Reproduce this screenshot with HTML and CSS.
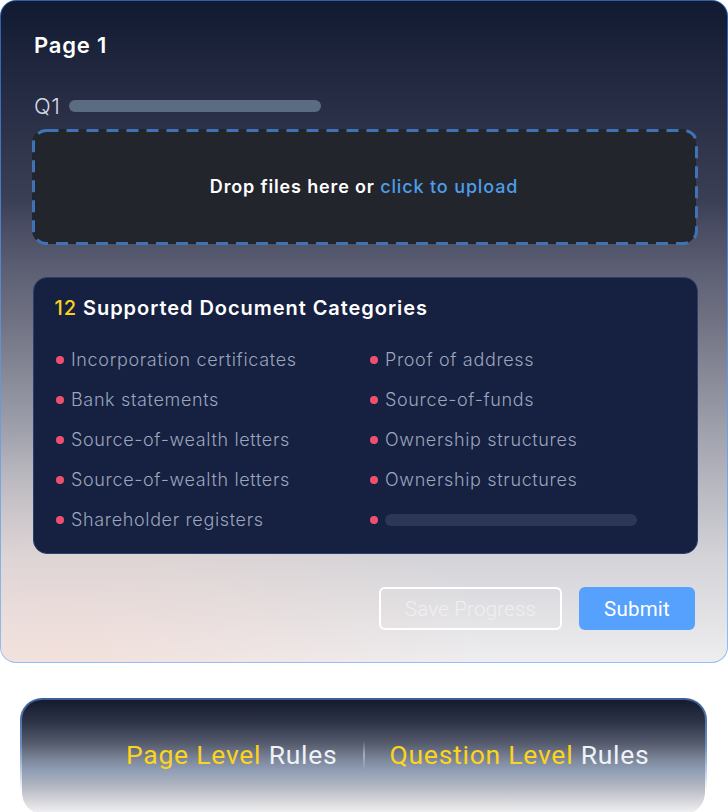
FILE: index.html
```html
<!DOCTYPE html>
<html lang="en">
<head>
<meta charset="utf-8">
<title>Upload</title>
<link rel="stylesheet" href="styles.css">
</head>
<body>
<div class="card">
  <h1 class="page-title">Page 1</h1>
  <div class="question">
    <span class="q-label">Q1</span>
    <span class="q-bar"></span>
  </div>
  <div class="dropzone">
    <svg class="dash" width="666" height="116" viewBox="0 0 666 116" aria-hidden="true">
      <rect x="1.5" y="1.5" width="663" height="113" rx="13" ry="13" fill="none" stroke="#3f73b6" stroke-width="3" stroke-dasharray="12 8"/>
    </svg>
    <span class="drop-text">Drop files here or <span class="drop-link">click to upload</span></span>
  </div>
  <div class="categories">
    <div class="cat-title"><span class="cat-count">12</span> Supported Document Categories</div>
    <ul class="cat-list">
      <li class="cat-item"><span class="dot"></span>Incorporation certificates</li>
      <li class="cat-item"><span class="dot"></span>Proof of address</li>
      <li class="cat-item"><span class="dot"></span>Bank statements</li>
      <li class="cat-item"><span class="dot"></span>Source-of-funds</li>
      <li class="cat-item"><span class="dot"></span>Source-of-wealth letters</li>
      <li class="cat-item"><span class="dot"></span>Ownership structures</li>
      <li class="cat-item"><span class="dot"></span>Source-of-wealth letters</li>
      <li class="cat-item"><span class="dot"></span>Ownership structures</li>
      <li class="cat-item"><span class="dot"></span>Shareholder registers</li>
      <li class="cat-item"><span class="dot"></span><span class="cat-bar"></span></li>
    </ul>
  </div>
  <div class="actions">
    <button class="btn btn-outline">Save Progress</button>
    <button class="btn btn-primary">Submit</button>
  </div>
</div>
<div class="rules">
  <div class="rule rule-left"><span class="hl">Page Level</span> Rules</div>
  <span class="rule-divider"></span>
  <div class="rule rule-right"><span class="hl">Question Level</span> Rules</div>
</div>
</body>
</html>
```
FILE: styles.css
```css
* { box-sizing: border-box; }
html, body {
  margin: 0;
  padding: 0;
  background: #ffffff;
  width: 728px;
  height: 812px;
  overflow: hidden;
  font-family: Inter, "Noto Sans", sans-serif;
}

.card {
  width: 728px;
  height: 663px;
  border: 1.5px solid transparent;
  border-radius: 16px;
  padding: 29.5px 31px 32px 31px;
  display: flex;
  flex-direction: column;
  background:
    radial-gradient(ellipse 60% 35% at 8% 100%, rgba(246, 214, 204, 0.55), rgba(246, 214, 204, 0) 100%) padding-box,
    linear-gradient(180deg, #111a31 0%, #252b42 14%, #3b3f56 30%, #5b5e72 40%, #6f7182 48%, #8b8d9b 58%, #b3b4bd 72%, #d3d3d8 84%, #eeeef0 100%) padding-box,
    linear-gradient(180deg, #2f5fa6 0%, #5f8fd6 50%, #94bdf5 100%) border-box;
}

.page-title {
  margin: 0;
  font-size: 22px;
  line-height: 28px;
  font-weight: 600;
  letter-spacing: 0.8px;
  color: #ffffff;
  padding-left: 2px;
}

.question {
  margin-top: 33px;
  height: 28px;
  display: flex;
  align-items: center;
  gap: 9px;
}
.q-label {
  font-size: 22px;
  line-height: 28px;
  font-weight: 300;
  letter-spacing: 0.5px;
  color: #d6dae2;
  padding-left: 2px;
}
.q-bar {
  width: 252px;
  height: 12px;
  border-radius: 6px;
  background: #5a6b82;
}

.dropzone {
  position: relative;
  margin-top: 9px;
  height: 116px;
  border-radius: 14px;
  background: #23252d;
  display: flex;
  align-items: center;
  justify-content: center;
}
.dash {
  position: absolute;
  left: 0;
  top: 0;
}
.drop-text {
  font-size: 18px;
  font-weight: 600;
  letter-spacing: 0.85px;
  color: #ffffff;
}
.drop-link {
  color: #4d9de8;
  font-weight: 500;
}

.categories {
  margin-top: 33px;
  height: 277px;
  margin-left: 1px;
  margin-right: -2px;
  background: #162040;
  border: 1.5px solid #29406f;
  border-radius: 14px;
  padding: 15.5px 20px 14.5px 20.5px;
}
.cat-title {
  font-size: 20px;
  line-height: 28px;
  font-weight: 600;
  letter-spacing: 0.95px;
  color: #ffffff;
}
.cat-count {
  color: #f7d31c;
  font-weight: 500;
}
.cat-list {
  list-style: none;
  margin: 18px 0 0 0;
  padding: 0;
  display: grid;
  grid-template-columns: 314px 1fr;
  grid-auto-rows: 40px;
}
.cat-item {
  display: flex;
  align-items: center;
  font-size: 18px;
  font-weight: 300;
  letter-spacing: 0.65px;
  color: #9ba5bd;
}
.dot {
  width: 8px;
  height: 8px;
  border-radius: 50%;
  background: #f0506f;
  margin-left: 1.5px;
  margin-right: 7px;
  margin-top: 1px;
  flex: none;
}
.cat-bar {
  width: 252px;
  height: 12px;
  border-radius: 6px;
  background: #2c3656;
}

.actions {
  margin-top: 33px;
  display: flex;
  justify-content: flex-end;
  gap: 17px;
  padding-right: 1px;
}
.btn {
  height: 43px;
  border-radius: 6px;
  font-family: Roboto, "Liberation Sans", sans-serif;
  font-size: 20.5px;
  font-weight: 300;
  letter-spacing: 0.2px;
  cursor: pointer;
  padding: 0;
}
.btn-outline {
  width: 183px;
  background: transparent;
  border: 2px solid #ffffff;
  color: #eef0f3;
}
.btn-primary {
  width: 116px;
  background: #55a1fd;
  border: none;
  color: #ffffff;
  font-weight: 400;
}

.rules {
  margin: 35px 0 0 20px;
  width: 687px;
  height: 116px;
  border: 2px solid transparent;
  border-bottom: none;
  border-radius: 22px;
  display: grid;
  grid-template-columns: 1fr auto 1fr;
  align-items: center;
  column-gap: 25px;
  padding-bottom: 5px;
  background:
    linear-gradient(180deg, #151a2f 0%, #2f3549 20%, #555b6d 38%, #7c8699 52%, #909eb6 62%, #aeb3bf 74%, #cfd0d5 86%, #f3f3f5 100%) padding-box,
    linear-gradient(180deg, #3c5e96 0%, #6a8cc0 40%, rgba(200, 210, 225, 0) 80%) border-box;
}
.rule {
  font-family: Roboto, "Liberation Sans", sans-serif;
  font-size: 26.5px;
  font-weight: 400;
  letter-spacing: 0.75px;
  color: #eef1f7;
  white-space: nowrap;
}
.rule-left { justify-self: end; }
.rule-right { justify-self: start; }
.hl { color: #fcd41d; }
.rule-divider {
  width: 2px;
  height: 30px;
  background: linear-gradient(180deg, rgba(255,255,255,0) 0%, rgba(220,225,235,0.5) 50%, rgba(255,255,255,0) 100%);
}
```
